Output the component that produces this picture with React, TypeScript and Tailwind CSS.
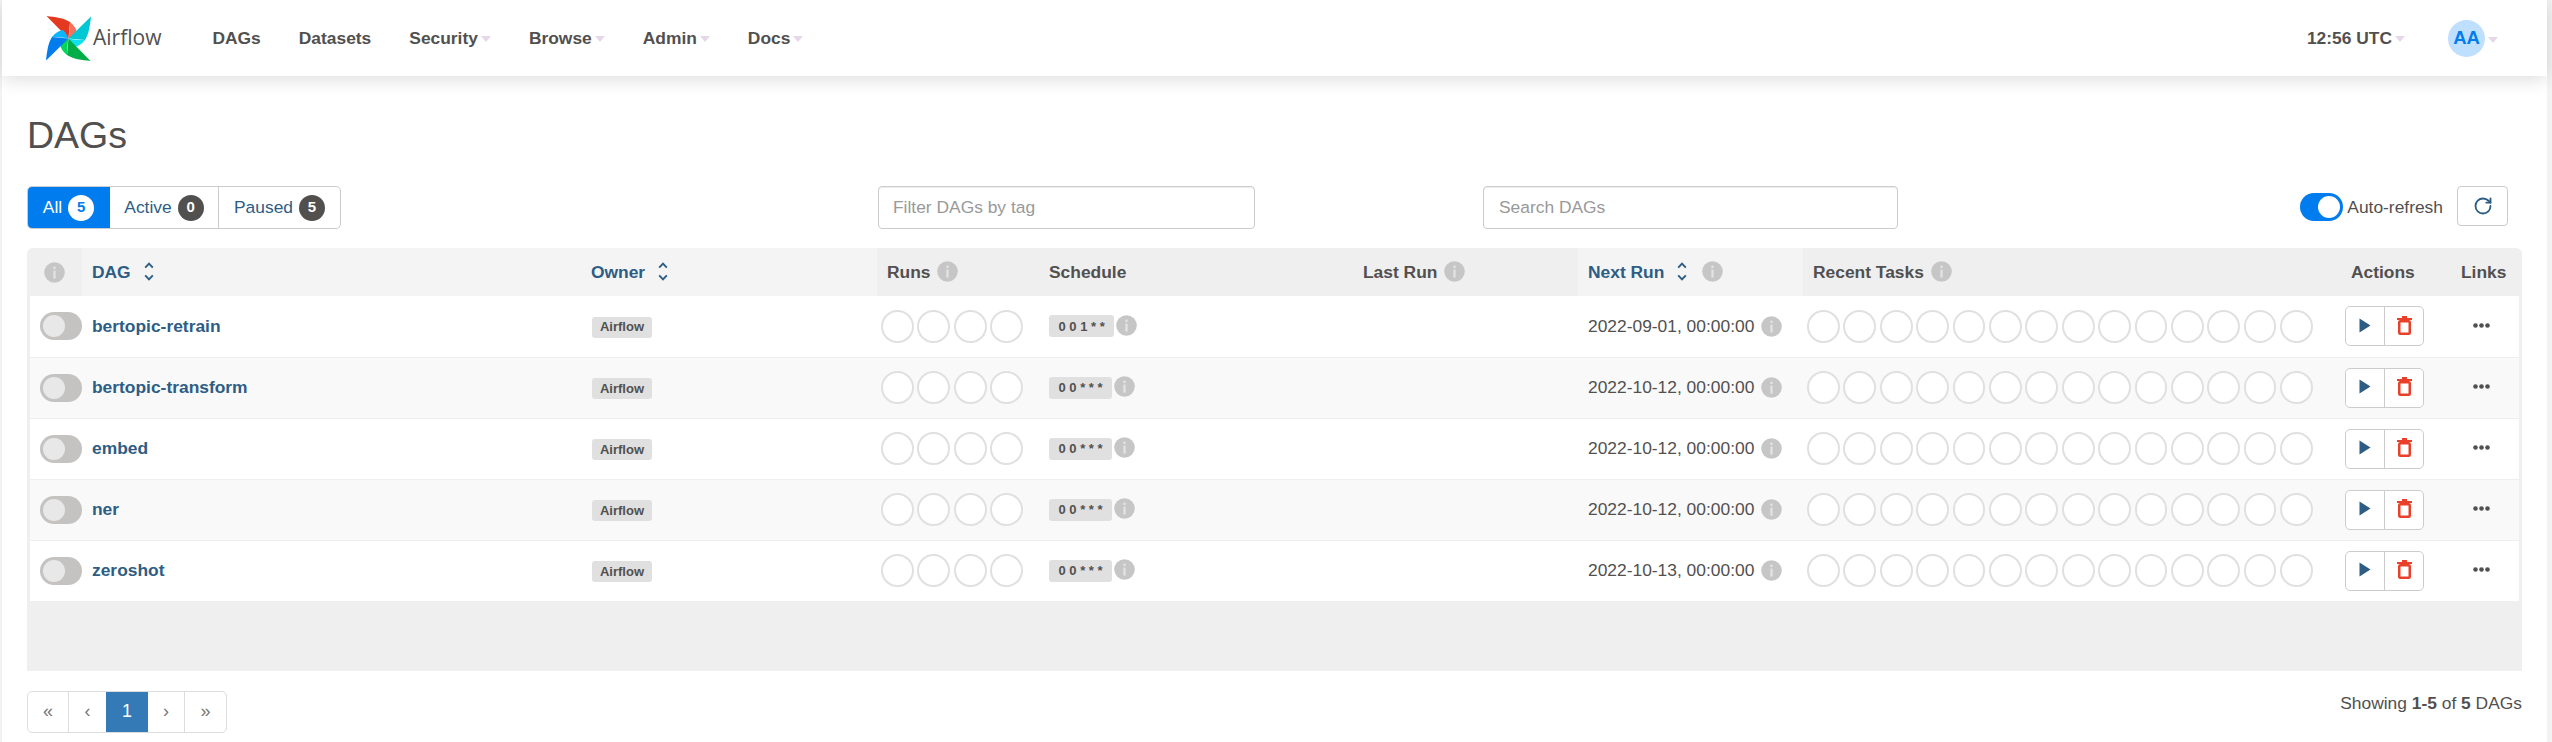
import { RotateCw } from "lucide-react";

const dags = [
  { name: "bertopic-retrain", cron: "0 0 1 * *", next: "2022-09-01, 00:00:00" },
  { name: "bertopic-transform", cron: "0 0 * * *", next: "2022-10-12, 00:00:00" },
  { name: "embed", cron: "0 0 * * *", next: "2022-10-12, 00:00:00" },
  { name: "ner", cron: "0 0 * * *", next: "2022-10-12, 00:00:00" },
  { name: "zeroshot", cron: "0 0 * * *", next: "2022-10-13, 00:00:00" },
];

function Logo() {
  const blade = (main: string, light: string, angle: number) => (
    <g transform={`rotate(${angle} 22.5 22.5)`}>
      <path d="M0.5 0 C9 1 18 2 24 6 L22.5 22.5 Z" fill={main} />
      <path d="M24 6 C28 9 30.5 13 31 17 C28 20 25 21.5 22.5 22.5 C23.5 17 24 11 24 6 Z" fill={light} />
    </g>
  );
  return (
    <svg width="45" height="45" viewBox="0 0 45 45" className="shrink-0">
      {blade("#e43921", "#f4725d", 0)}
      {blade("#00c7d4", "#11e1ee", 90)}
      {blade("#00ad46", "#04d659", 180)}
      {blade("#017cee", "#0cb6ff", 270)}
    </svg>
  );
}

function Caret() {
  return <span className="ml-[3px] mt-[3px] h-0 w-0 border-x-[5px] border-t-[6px] border-x-transparent border-t-[#e6d8e8]" />;
}

function NavItem({ label, caret }: { label: string; caret?: boolean }) {
  return (
    <span className="flex items-center text-[17.4px] font-bold text-[#51504f]">
      {label}
      {caret && <Caret />}
    </span>
  );
}

function Info() {
  return (
    <svg width="21" height="21" viewBox="0 0 21 21" className="shrink-0">
      <circle cx="10.5" cy="10.5" r="10.3" fill="#c6c6c6" />
      <rect x="9.4" y="4.6" width="2.2" height="2.4" fill="#e4e4e4" />
      <rect x="9.4" y="8.6" width="2.2" height="8" fill="#e4e4e4" />
    </svg>
  );
}

function Sort() {
  return (
    <svg width="10" height="19" viewBox="0 0 10 19" className="ml-[13px] shrink-0" fill="none" stroke="#2d5d84" strokeWidth="1.9">
      <path d="M1.2 5.6 L5 1.6 L8.8 5.6" />
      <path d="M1.2 13.4 L5 17.4 L8.8 13.4" />
    </svg>
  );
}

function Toggle() {
  return (
    <span className="flex h-[28px] w-[42px] items-center rounded-full bg-[#c4c3c1] pl-[3px]">
      <span className="h-[22px] w-[22px] rounded-full bg-[#e8e8e8]" />
    </span>
  );
}

function Circles({ count }: { count: number }) {
  return (
    <div className="flex gap-[3.6px]">
      {Array.from({ length: count }).map((_, i) => (
        <span key={i} className="h-[32.8px] w-[32.8px] shrink-0 rounded-full border-2 border-[#e0e0e0] bg-white" />
      ))}
    </div>
  );
}

function Th({ className = "", children }: { className?: string; children: React.ReactNode }) {
  return (
    <th className={`px-[10px] text-left align-middle text-[17.4px] font-bold ${className}`}>
      <div className="flex items-center">{children}</div>
    </th>
  );
}

export default function App() {
  return (
    <div className="h-[742px] overflow-hidden bg-[#f3f3f3] pl-[2px] pr-[5px] font-['Liberation_Sans',Arial,sans-serif] text-[#51504f]">
      <div className="h-full bg-white">
        <header className="relative z-10 flex h-[76px] items-center justify-between bg-white pl-[44px] pr-[46px] shadow-[0_3px_18px_rgba(0,0,0,0.14)]">
          <div className="flex items-center">
            <Logo />
            <span className="ml-[2px] font-['Open_Sans',sans-serif] text-[21px] text-[#51504f]">Airflow</span>
            <nav className="ml-[51px] flex items-center gap-[38px]">
              <NavItem label="DAGs" />
              <NavItem label="Datasets" />
              <NavItem label="Security" caret />
              <NavItem label="Browse" caret />
              <NavItem label="Admin" caret />
              <NavItem label="Docs" caret />
            </nav>
          </div>
          <div className="flex items-center pr-[3px]">
            <NavItem label="12:56 UTC" caret />
            <span className="ml-[43px] flex h-[37px] w-[37px] items-center justify-center rounded-full bg-[#bfdffe] text-[18.5px] font-bold text-[#017cee]">AA</span>
            <Caret />
          </div>
        </header>

        <main className="px-[25px]">
          <h2 className="mt-[36px] text-[37.5px] font-normal leading-[46px] text-[#51504f]">DAGs</h2>

          <div className="mt-[28px] flex h-[43px] items-start">
            <div className="flex w-[851px]">
              <div className="flex h-[43px] overflow-hidden rounded-[5px] border border-[#cccccc] text-[17.4px]">
                <span className="-my-px -ml-px flex w-[83px] items-center justify-center bg-[#017cee] text-white">
                  All<span className="ml-[6px] flex h-[26px] w-[26px] items-center justify-center rounded-full bg-white text-[15px] font-bold text-[#017cee]">5</span>
                </span>
                <span className="flex w-[109px] items-center justify-center border-r border-[#cccccc] text-[#2d5d84]">
                  Active<span className="ml-[6px] flex h-[26px] w-[26px] items-center justify-center rounded-full bg-[#51504f] text-[15px] font-bold text-white">0</span>
                </span>
                <span className="flex w-[121px] items-center justify-center text-[#2d5d84]">
                  Paused<span className="ml-[6px] flex h-[26px] w-[26px] items-center justify-center rounded-full bg-[#51504f] text-[15px] font-bold text-white">5</span>
                </span>
              </div>
            </div>
            <div className="flex h-[43px] w-[377px] items-center rounded-[4px] border border-[#cccccc] px-[14px] text-[17.4px] text-[#999999] shadow-[inset_0_1px_1px_rgba(0,0,0,0.075)]">Filter DAGs by tag</div>
            <div className="ml-[228px] flex h-[43px] w-[415px] items-center rounded-[4px] border border-[#cccccc] px-[15px] text-[17.4px] text-[#999999] shadow-[inset_0_1px_1px_rgba(0,0,0,0.075)]">Search DAGs</div>
            <div className="ml-auto flex items-start">
              <span className="mt-[7px] flex h-[28px] w-[43px] items-center justify-end rounded-full bg-[#017cee] pr-[3px]">
                <span className="h-[22px] w-[22px] rounded-full bg-white" />
              </span>
              <span className="mt-[9px] ml-[4px] text-[17.4px] leading-[24px]">Auto-refresh</span>
              <span className="ml-[14px] mr-[14px] flex h-[40px] w-[51px] items-center justify-center rounded-[4px] border border-[#cccccc]">
                <RotateCw size={20} color="#2d5d84" strokeWidth={2.2} />
              </span>
            </div>
          </div>

          <div className="mt-[19px] rounded-t-[6px] bg-[#efefef] px-[3px] pb-[69px]">
            <table className="w-full table-fixed">
              <colgroup>
                <col className="w-[52px]" />
                <col className="w-[499px]" />
                <col className="w-[296px]" />
                <col className="w-[162px]" />
                <col className="w-[314px]" />
                <col className="w-[225px]" />
                <col className="w-[225px]" />
                <col className="w-[531px]" />
                <col className="w-[117px]" />
                <col className="w-[68px]" />
              </colgroup>
              <thead>
                <tr className="h-[48px]">
                  <th className="pl-[14px] align-middle"><Info /></th>
                  <Th className="bg-[#f4f4f4] text-[#2d5d84]">DAG<Sort /></Th>
                  <Th className="bg-[#f4f4f4] text-[#2d5d84]">Owner<Sort /></Th>
                  <Th>Runs<span className="ml-[7px]"><Info /></span></Th>
                  <Th>Schedule</Th>
                  <Th>Last Run<span className="ml-[7px]"><Info /></span></Th>
                  <Th className="bg-[#f4f4f4] text-[#2d5d84]">Next Run<Sort /><span className="ml-[15px]"><Info /></span></Th>
                  <Th>Recent Tasks<span className="ml-[7px]"><Info /></span></Th>
                  <Th className="pl-[17px]">Actions</Th>
                  <Th>Links</Th>
                </tr>
              </thead>
              <tbody>
                {dags.map((d, i) => (
                  <tr key={d.name} className={`h-[61px] border-b border-[#eeeeee] ${i % 2 === 1 ? "bg-[#f9f9f9]" : "bg-white"}`}>
                    <td className="pl-[10px] align-middle"><Toggle /></td>
                    <td className="px-[10px] align-middle">
                      <span className="text-[17.4px] font-bold text-[#2d5d84]">{d.name}</span>
                    </td>
                    <td className="px-[11px] align-middle">
                      <span className="inline-flex h-[21px] w-[60px] items-center justify-center rounded-[3px] bg-[#e0e0e0] text-[13px] font-bold">Airflow</span>
                    </td>
                    <td className="pl-[4px] align-middle"><Circles count={4} /></td>
                    <td className="pl-[10px] align-middle">
                      <div className="flex items-center">
                        <span className="flex h-[22px] items-center whitespace-pre rounded-[3px] bg-[#e0e0e0] px-[9.5px] text-[13px] font-bold leading-none">{d.cron}</span>
                        <span className="relative -top-px ml-[2px]"><Info /></span>
                      </div>
                    </td>
                    <td />
                    <td className="pl-[10px] align-middle">
                      <div className="flex items-center text-[17.4px]">
                        {d.next}
                        <span className="ml-[7px]"><Info /></span>
                      </div>
                    </td>
                    <td className="pl-[4px] align-middle"><Circles count={14} /></td>
                    <td className="pl-[11px] align-middle">
                      <div className="flex h-[40px] w-[79px] rounded-[5px] border border-[#cccccc] bg-white">
                        <span className="flex w-[39px] items-center justify-center border-r border-[#cccccc]">
                          <svg width="12" height="15" viewBox="0 0 12 15" className="relative -top-px"><path d="M0.5 0.5 L11.5 7.5 L0.5 14.5 Z" fill="#2d5d84" /></svg>
                        </span>
                        <span className="flex flex-1 items-center justify-center">
                          <svg width="15" height="19" viewBox="0 0 15 19" fill="none" stroke="#e8402a" className="relative -top-px">
                            <path d="M0 3 H15" strokeWidth="2" />
                            <path d="M5 1 H10" strokeWidth="2" />
                            <rect x="2.25" y="5.25" width="10.5" height="12.5" rx="1" strokeWidth="2.5" />
                          </svg>
                        </span>
                      </div>
                    </td>
                    <td className="pl-[22px] align-middle">
                      <svg width="17" height="5" viewBox="0 0 17 5" fill="#51504f" className="relative -top-px">
                        <circle cx="2.5" cy="2.5" r="2.3" /><circle cx="8.5" cy="2.5" r="2.3" /><circle cx="14.5" cy="2.5" r="2.3" />
                      </svg>
                    </td>
                  </tr>
                ))}
              </tbody>
            </table>
          </div>

          <div className="mt-[20px] flex items-start justify-between">
            <div className="flex h-[42px] overflow-hidden rounded-[5px] border border-[#dddddd] text-[#777777]">
              <span className="flex w-[41px] items-center justify-center border-r border-[#dddddd] text-[18px]">«</span>
              <span className="flex w-[37px] items-center justify-center text-[18px]">‹</span>
              <span className="-my-px flex w-[42px] items-center justify-center bg-[#337ab7] text-[18px] text-white">1</span>
              <span className="flex w-[37px] items-center justify-center border-r border-[#dddddd] text-[18px]">›</span>
              <span className="flex w-[41px] items-center justify-center text-[18px]">»</span>
            </div>
            <p className="text-[17.4px] leading-[24px]">
              Showing <b>1-5</b> of <b>5</b> DAGs
            </p>
          </div>
        </main>
      </div>
    </div>
  );
}
